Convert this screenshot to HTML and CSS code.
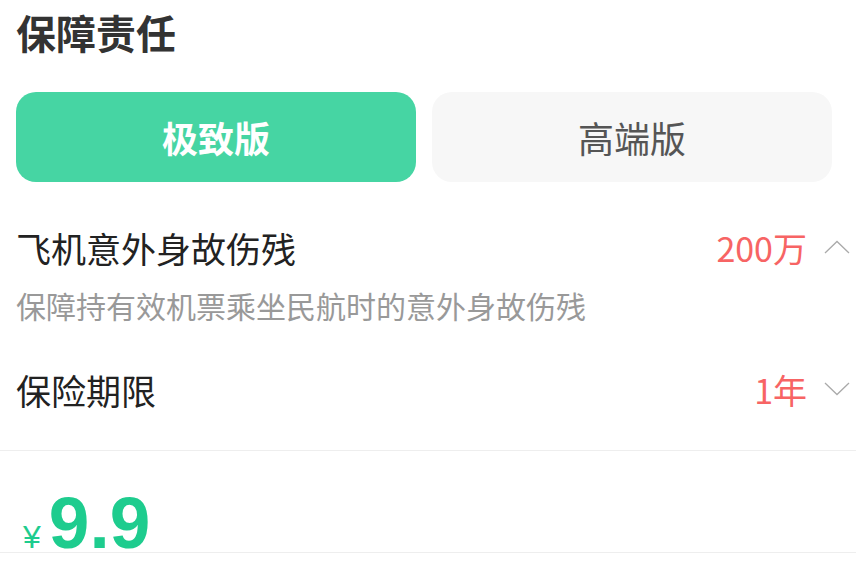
FILE: index.html
```html
<!DOCTYPE html>
<html lang="zh-CN">
<head>
    <meta charset="UTF-8">
    <meta name="viewport" content="width=device-width, initial-scale=1.0">
    <title>保障责任</title>
    <link rel="stylesheet" href="styles.css">
</head>
<body>
    <div class="page">
        <h2 class="section-title">保障责任</h2>

        <!-- plan tabs -->
        <div class="plan-tabs">
            <div class="plan-tab active">极致版</div>
            <div class="plan-tab">高端版</div>
        </div>

        <div class="item">
            <div class="item-row">
                <span class="item-name">飞机意外身故伤残</span>
                <span class="item-right">
                    <span class="item-value">200万</span>
                    <svg class="chevron" width="26" height="14" viewBox="0 0 26 14">
                        <polyline points="1,13 13,1.5 25,13" fill="none" stroke="#aaa" stroke-width="1.3"/>
                    </svg>
                </span>
            </div>
            <div class="item-desc">保障持有效机票乘坐民航时的意外身故伤残</div>
        </div>

        <div class="item last">
            <div class="item-row">
                <span class="item-name">保险期限</span>
                <span class="item-right">
                    <span class="item-value">1年</span>
                    <svg class="chevron" width="26" height="14" viewBox="0 0 26 14">
                        <polyline points="1,1 13,12.5 25,1" fill="none" stroke="#aaa" stroke-width="1.3"/>
                    </svg>
                </span>
            </div>
        </div>
    </div>

    <div class="price-bar">
        <span class="currency">¥</span>
        <span class="price">9.9</span>
    </div>
</body>
</html>
```

FILE: styles.css
```css
body {
    margin: 0;
    font-family: "Noto Sans CJK SC", "Liberation Sans", sans-serif;
    background: #fff;
    color: #333;
}
.page {
    padding: 0 6px 0 16px;
}
.section-title {
    margin: 0;
    font-size: 40px;
    line-height: 64px;
    font-weight: bold;
    color: #333;
}
.plan-tabs {
    display: flex;
    gap: 16px;
    margin-top: 28px;
    margin-right: 18px;
}
.plan-tab {
    flex: 1;
    height: 90px;
    line-height: 90px;
    border-radius: 20px;
    background: #f7f7f7;
    color: #555;
    font-size: 36px;
    text-align: center;
}
.plan-tab.active {
    background: #46d5a3;
    color: #fff;
    font-weight: bold;
}
.item {
    padding-top: 40px;
}
.item.last {
    padding-top: 39px;
    padding-bottom: 36px;
}
.item-row {
    display: flex;
    justify-content: space-between;
    align-items: center;
    height: 50px;
}
.item-name {
    font-size: 35px;
    color: #222;
}
.item-right {
    display: flex;
    align-items: center;
    gap: 17px;
}
.item-value {
    font-size: 34px;
    color: #f76464;
}
.item-desc {
    margin-top: 13px;
    font-size: 30px;
    line-height: 40px;
    color: #999;
}
.price-bar {
    display: flex;
    align-items: baseline;
    padding: 43px 16px 0 23px;
    height: 58px;
    border-top: 1px solid #eee;
    border-bottom: 1px solid #eee;
    color: #1ecc8e;
    font-family: "Liberation Sans", Arial, sans-serif;
}
.currency {
    font-size: 32px;
    line-height: 58px;
    margin-right: 8px;
}
.price {
    font-size: 73px;
    line-height: 58px;
    font-weight: bold;
}
```
